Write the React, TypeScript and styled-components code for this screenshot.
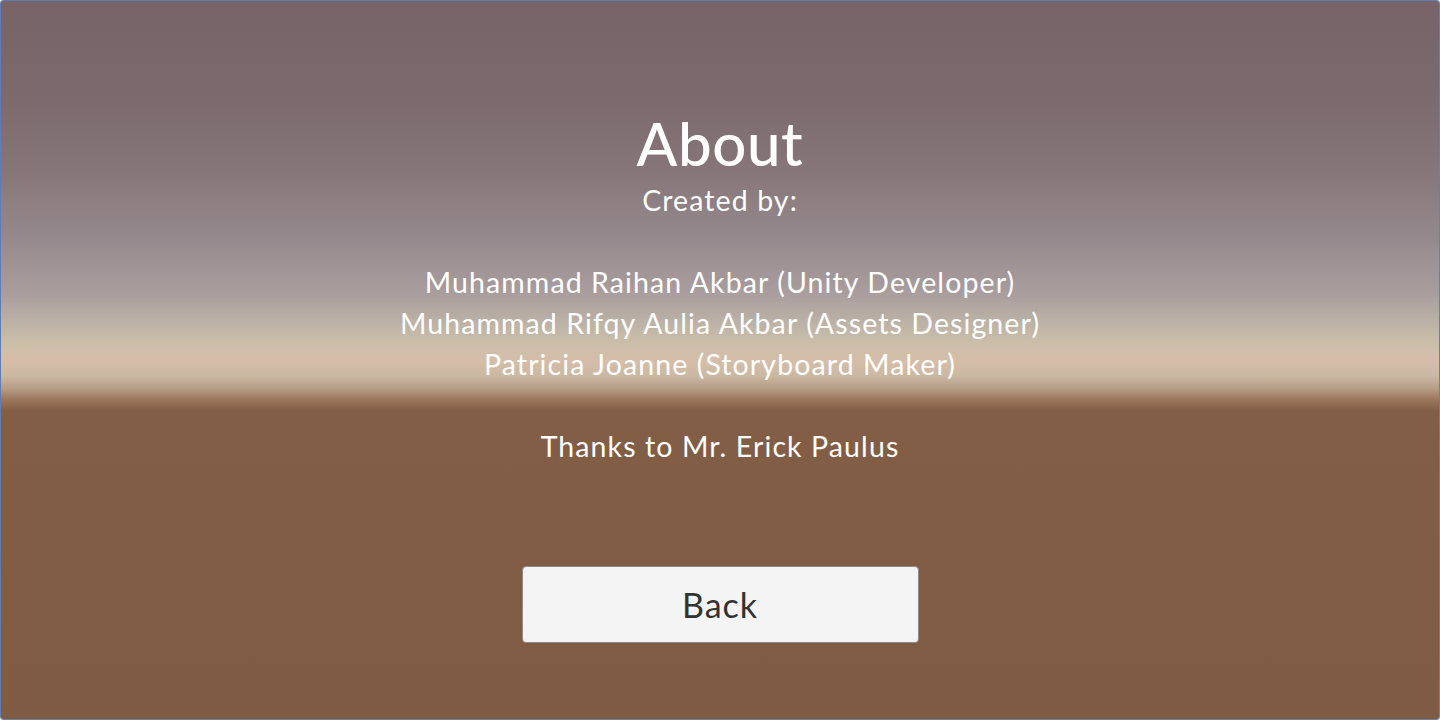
import React from "react";
import styled, { createGlobalStyle } from "styled-components";

const Global = createGlobalStyle`
  html, body { margin: 0; padding: 0; width: 1440px; height: 720px; overflow: hidden; }
  body { font-family: "Lato", "Noto Sans", sans-serif; }
`;

const Frame = styled.div`
  box-sizing: border-box;
  width: 1440px;
  height: 720px;
  border: 1px solid #6f7f9c;
  border-top-color: #5f7cb4;
  border-left-color: #5f7cb4;
  border-radius: 4px;
  overflow: hidden;
  background: linear-gradient(
    to bottom,
    #776368 0px,
    #7c6a6e 100px,
    #867679 170px,
    #968a8e 240px,
    #a89c9d 290px,
    #bcb2a6 322px,
    #cbbfaa 342px,
    #d5bda9 360px,
    #cab8a2 375px,
    #b59c84 388px,
    #987259 400px,
    #835e46 410px,
    #805b43 720px
  );
  display: flex;
  flex-direction: column;
  align-items: center;
`;

const Title = styled.h1`
  margin: 104px 0 0;
  font-family: "Lato", sans-serif;
  font-weight: 500;
  font-size: 60px;
  line-height: 76px;
  color: #ffffff;
  letter-spacing: 0.6px;
`;

const Body = styled.div`
  margin-top: -1px;
  display: flex;
  flex-direction: column;
  align-items: center;
  font-family: "Lato", sans-serif;
  font-size: 28.5px;
  line-height: 41px;
  letter-spacing: 1.1px;
  color: #ffffff;
  text-align: center;
`;

const Line = styled.div<{ $gap?: boolean }>`
  margin-top: ${(p) => (p.$gap ? "41px" : "0")};
  white-space: nowrap;
`;

const BackButton = styled.button`
  margin-top: 99px;
  box-sizing: border-box;
  width: 397px;
  height: 77px;
  background: #f4f4f4;
  border: 1px solid #8a8a8a;
  border-radius: 4px;
  font-family: "Lato", sans-serif;
  font-size: 34px;
  letter-spacing: 1px;
  color: #323232;
  cursor: pointer;
  padding: 0;
`;

export default function App() {
  return (
    <>
      <Global />
      <Frame>
        <Title>About</Title>
        <Body>
          <Line>Created by:</Line>
          <Line $gap>Muhammad Raihan Akbar (Unity Developer)</Line>
          <Line>Muhammad Rifqy Aulia Akbar (Assets Designer)</Line>
          <Line>Patricia Joanne (Storyboard Maker)</Line>
          <Line $gap>Thanks to Mr. Erick Paulus</Line>
        </Body>
        <BackButton>Back</BackButton>
      </Frame>
    </>
  );
}
